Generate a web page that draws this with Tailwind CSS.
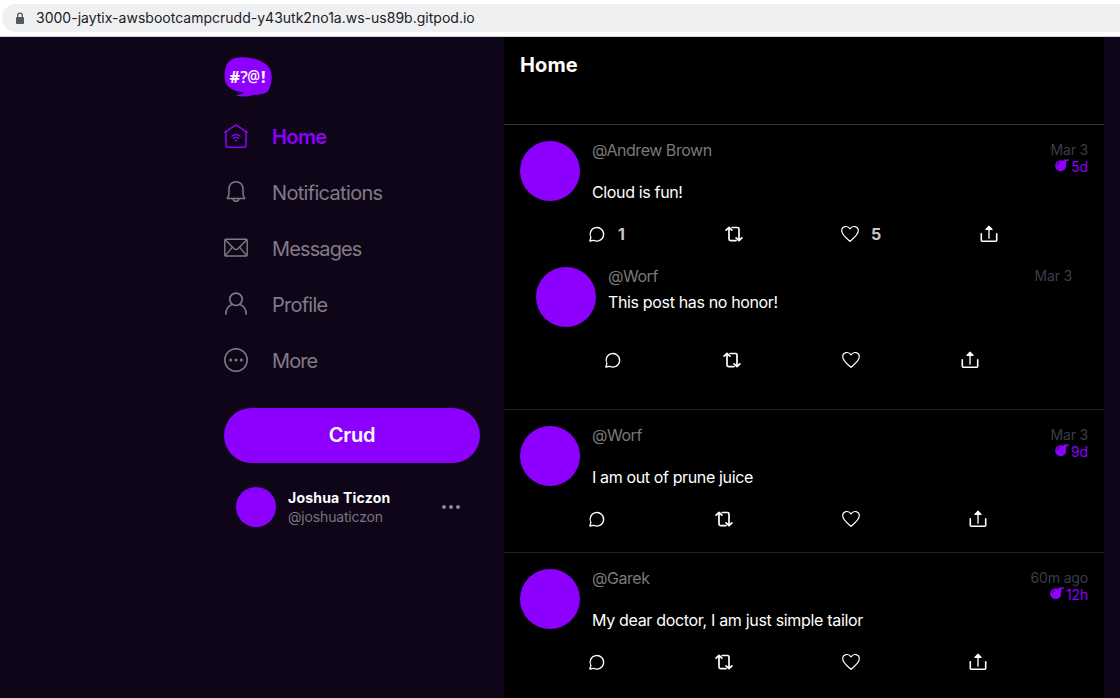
<!DOCTYPE html>
<html lang="en">
<head>
<meta charset="utf-8">
<title>Home</title>
<script src="https://cdn.jsdelivr.net/npm/@tailwindcss/browser@4"></script>
</head>
<body class="h-[698px] w-[1120px] overflow-hidden bg-[#0f0518] font-['Inter',sans-serif]">
<svg class="hidden">
  <symbol id="comment" viewBox="0 0 18 18"><path d="M1.800 16 2.900 12.600A6.800 6.800 0 1 1 5.600 15.300Z" fill="none" stroke="#fff" stroke-width="1.3" stroke-linejoin="round"/></symbol>
  <symbol id="repost" viewBox="0 0 18 18"><path d="M1.100 5.200 4 2.400l2.900 2.800M4 2.800V14q0 1.600 1.600 1.600H11M7.200 2.500H12.400q1.600 0 1.600 1.600V15.200M11.100 12.900 14 15.700l2.900-2.800" fill="none" stroke="#fff" stroke-width="1.700" stroke-linecap="round" stroke-linejoin="round"/></symbol>
  <symbol id="heart" viewBox="0 0 18 18"><path d="M9 16.400C6.500 14.200.7 9.800.7 5.800.7 1.300 6.400-.1 9 3.800 11.600-.1 17.300 1.300 17.300 5.800 17.300 9.800 11.500 14.200 9 16.400Z" fill="none" stroke="#fff" stroke-width="1.2" stroke-linejoin="round"/></symbol>
  <symbol id="share" viewBox="0 0 18 18"><path d="M9 13V3" fill="none" stroke="#ccc" stroke-width="1.700" stroke-linecap="round"/><path d="M1.300 8.700v6.600q0 1 1 1H15.700q1 0 1-1V8.700" fill="none" stroke="#fff" stroke-width="1.600" stroke-linecap="round"/><path d="M5.900 4.300 9 1.200l3.100 3.100Z" fill="#fff" stroke="#fff" stroke-width="1.200" stroke-linejoin="round"/></symbol>
  <symbol id="bomb" viewBox="0 0 14 13"><circle cx="5.700" cy="6.700" r="5.500" fill="#8d00ff"/><path d="M7.300 2.500 9.300.6 14 .3 13.700 1.800 11.600 2 11.300 4.800 10 6Z" fill="#8d00ff"/><path d="M2.300 6.300Q2.600 3.800 4.800 3.300" fill="none" stroke="#000" stroke-width=".8"/></symbol>
</svg>
<div class="flex h-[37px] items-start border-b border-[#d5d5d8] bg-white pt-1 pl-0.5">
  <div class="flex h-7 w-full items-center rounded-l-full bg-[#eff0f2] pl-[13px] text-sm text-[#202124]">
    <svg class="h-[13px] w-[10px]" viewBox="0 0 10 13"><rect x="1" y="5" width="8" height="7" rx="1" fill="#555960"/><path d="M2.700 5.500V3.500a2.300 2.300 0 0 1 4.600 0v2" fill="none" stroke="#555960" stroke-width="1.300"/></svg>
    <span class="ml-[11px] whitespace-nowrap tracking-[0.01px]">3000-jaytix-awsbootcampcrudd-y43utk2no1a.ws-us89b.gitpod.io</span>
  </div>
</div>
<div class="flex h-[661px]">
  <aside class="w-[504px] shrink-0 pr-6 pl-[224px]">
    <svg class="mt-5 h-10 w-12" viewBox="0 0 48 40"><path d="M15 .4C27-.5 40 3.500 45.500 11 49 17 48 25 45.500 31 44.500 37 37 37.500 30 37.800 24 40 17 40 11.500 38.800 15 38 18 37 19.500 35.300 11 34.500 4 32 1.500 25 0 21 .3 12 3 7 6 2.500 10 .7 15 .4Z" fill="#8d00ff"/><g fill="#fff" font-family="Open Sans, sans-serif" font-size="16" font-weight="700"><text x="5.500" y="25.500" textLength="10.500" lengthAdjust="spacingAndGlyphs">#</text><text x="16.200" y="26" textLength="7.500" lengthAdjust="spacingAndGlyphs" font-weight="600">?</text><text x="23.300" y="25" font-weight="600" textLength="12.800" lengthAdjust="spacingAndGlyphs">@</text><text x="37" y="26">!</text></g></svg>
    <nav class="mt-3 text-xl leading-6 text-[#817b86]">
      <a class="flex h-14 items-center gap-6 font-semibold text-[#8d00ff]"><svg class="mb-0.5 size-6" viewBox="0 0 24 24" fill="none" stroke="currentColor" stroke-width="1.500" stroke-linecap="round" stroke-linejoin="round"><path d="M.8 8.300 12 .9 23.200 8.300M2 7.600V22.200q0 1 1 1H21q1 0 1-1V7.600"/><path d="M7.800 12.200q4.200-3.400 8.400 0M9.500 14.300q2.500-2 5 0" stroke-width="1.300"/><circle cx="12" cy="16.700" r=".6" fill="currentColor" stroke-width="1"/></svg><span class="tracking-[-0.03em]">Home</span></a>
      <a class="flex h-14 items-center gap-6"><svg class="mb-0.5 size-6" viewBox="0 0 24 24" fill="none" stroke="currentColor" stroke-width="1.500" stroke-linejoin="round"><path d="M3.200 18.500Q5 16 5 13V9C5-.8 19-.8 19 9v4q0 3 1.800 5.500ZM9 18.800q.5 2.500 3 2.500t3-2.500"/></svg><span class="tracking-[-0.034em]">Notifications</span></a>
      <a class="flex h-14 items-center gap-6"><svg class="mb-0.5 size-6" viewBox="0 0 24 24" fill="none" stroke="currentColor" stroke-width="1.400" stroke-linejoin="round"><rect x=".8" y="3.300" width="22.400" height="16.700" rx="1"/><path d="m1.200 3.700 8.900 9q1.900 1.600 3.800 0l8.900-9M1.200 19.600l7.300-8.500M22.800 19.600l-7.300-8.500"/></svg><span class="tracking-[-0.044em]">Messages</span></a>
      <a class="flex h-14 items-center gap-6"><svg class="mb-0.5 size-6" viewBox="0 0 24 24" fill="none" stroke="currentColor" stroke-width="1.600"><circle cx="12" cy="7.300" r="6.200"/><path d="M1.800 22.800C1.800 16.800 4.500 13.500 8.300 12.500M22.200 22.800C22.200 16.800 19.500 13.500 15.700 12.500"/></svg><span class="tracking-[-0.038em]">Profile</span></a>
      <a class="flex h-14 items-center gap-6"><svg class="mb-0.5 size-6" viewBox="0 0 24 24" fill="none" stroke="currentColor" stroke-width="1.500"><circle cx="12" cy="12" r="11.200"/><g fill="currentColor" stroke="none"><circle cx="6.700" cy="12" r="1.500"/><circle cx="12" cy="12" r="1.500"/><circle cx="17.300" cy="12" r="1.500"/></g></svg><span class="tracking-[-0.044em]">More</span></a>
    </nav>
    <button class="mt-[19px] flex h-[55px] w-full items-center justify-center rounded-full bg-[#8d00ff] pb-0.5 text-xl font-semibold tracking-[-0.01em] text-white">Crud</button>
    <div class="mt-6 flex items-center pr-5 pl-3">
      <div class="size-10 rounded-full bg-[#8d00ff]"></div>
      <div class="ml-3 text-sm leading-[19px]"><div class="font-bold tracking-[0.015em] text-white">Joshua Ticzon</div><div class="tracking-[-0.012em] text-[#79747f]">@joshuaticzon</div></div>
      <svg class="ml-auto h-1 w-[18px]" viewBox="0 0 18 4" fill="#918d95"><circle cx="2" cy="2" r="1.900"/><circle cx="9" cy="2" r="1.900"/><circle cx="16" cy="2" r="1.900"/></svg>
    </div>
  </aside>
  <main class="w-[600px] shrink-0 bg-black text-white">
    <header class="h-[88px] border-b border-[#2f3442] px-4 pt-4 text-xl leading-6 font-bold tracking-[0.005em]">Home</header>
    <article class="h-[284px] px-4 pt-4">
      <div class="flex h-[78px]">
        <div class="size-[60px] rounded-full bg-[#8d00ff]"></div>
        <div class="-mt-px ml-3 leading-5"><div class="text-[#797979] tracking-[-0.029em]">@Andrew Brown</div><p class="mt-[22px] tracking-[-0.022em]">Cloud is fun!</p></div>
        <div class="ml-auto text-right text-sm leading-[17px] tracking-[-0.012em] text-[#3a3d4a]"><div>Mar 3</div><div class="flex justify-end gap-[2px] text-[#8d00ff]"><svg class="mt-px h-[13px] w-[14px]"><use href="#bomb"/></svg>5d</div></div>
      </div>
      <div class="flex h-[30px] items-center pl-[68px] font-bold text-[#c8c8c8]">
        <div class="flex w-[137px] items-center gap-3"><svg class="size-[18px]"><use href="#comment"/></svg>1</div>
        <div class="w-[116px]"><svg class="size-[18px]"><use href="#repost"/></svg></div>
        <div class="flex w-[139px] items-center gap-3"><svg class="size-[18px]"><use href="#heart"/></svg>5</div>
        <svg class="size-[18px]"><use href="#share"/></svg>
      </div>
      <div class="px-4 pt-[18px]">
        <div class="flex h-[78px]">
          <div class="size-[60px] rounded-full bg-[#8d00ff]"></div>
          <div class="-mt-px ml-3 leading-5"><div class="text-[#797979] tracking-[-0.029em]">@Worf</div><p class="mt-1.5 tracking-[-0.022em]">This post has no honor!</p></div>
          <div class="ml-auto text-sm leading-[17px] tracking-[-0.012em] text-[#3a3d4a]">Mar 3</div>
        </div>
        <div class="flex h-[30px] items-center gap-[101px] pl-[68px]"><svg class="size-[18px]"><use href="#comment"/></svg><svg class="size-[18px]"><use href="#repost"/></svg><svg class="size-[18px]"><use href="#heart"/></svg><svg class="size-[18px]"><use href="#share"/></svg></div>
      </div>
    </article>
    <article class="h-[143px] border-t border-[#1c1f27] px-4 pt-4">
      <div class="flex h-[78px]">
        <div class="size-[60px] rounded-full bg-[#8d00ff]"></div>
        <div class="-mt-px ml-3 leading-5"><div class="text-[#797979] tracking-[-0.029em]">@Worf</div><p class="mt-[22px] tracking-[-0.023em]">I am out of prune juice</p></div>
        <div class="ml-auto text-right text-sm leading-[17px] tracking-[-0.012em] text-[#3a3d4a]"><div>Mar 3</div><div class="flex justify-end gap-[2px] text-[#8d00ff]"><svg class="mt-px h-[13px] w-[14px]"><use href="#bomb"/></svg>9d</div></div>
      </div>
      <div class="flex h-[30px] items-center gap-[109px] pl-[68px]"><svg class="size-[18px]"><use href="#comment"/></svg><svg class="size-[18px]"><use href="#repost"/></svg><svg class="size-[18px]"><use href="#heart"/></svg><svg class="size-[18px]"><use href="#share"/></svg></div>
    </article>
    <article class="h-[146px] border-t border-[#1c1f27] px-4 pt-4">
      <div class="flex h-[78px]">
        <div class="size-[60px] rounded-full bg-[#8d00ff]"></div>
        <div class="-mt-px ml-3 leading-5"><div class="text-[#797979] tracking-[-0.029em]">@Garek</div><p class="mt-[22px] tracking-[-0.02em]">My dear doctor, I am just simple tailor</p></div>
        <div class="ml-auto text-right text-sm leading-[17px] tracking-[-0.012em] text-[#3a3d4a]"><div>60m ago</div><div class="flex justify-end gap-[2px] text-[#8d00ff]"><svg class="mt-px h-[13px] w-[14px]"><use href="#bomb"/></svg>12h</div></div>
      </div>
      <div class="flex h-[30px] items-center gap-[109px] pl-[68px]"><svg class="size-[18px]"><use href="#comment"/></svg><svg class="size-[18px]"><use href="#repost"/></svg><svg class="size-[18px]"><use href="#heart"/></svg><svg class="size-[18px]"><use href="#share"/></svg></div>
    </article>
  </main>
</div>
</body>
</html>
